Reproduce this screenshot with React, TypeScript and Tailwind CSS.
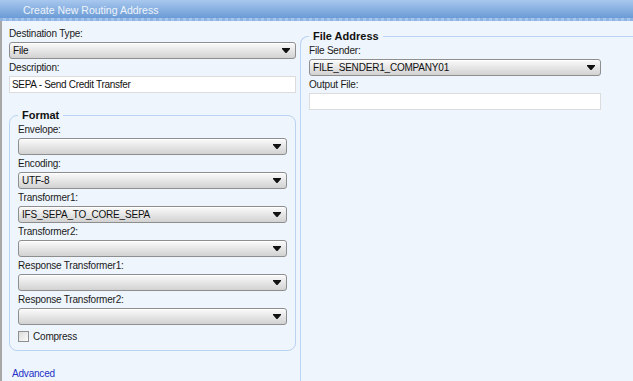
import { ReactNode } from "react";

const font = "font-['Liberation_Sans',Arial,sans-serif]";

function Arrow() {
    return (
        <svg width="8" height="5" viewBox="0 0 8 5" className="shrink-0">
            <path d="M0 0 H8 V1 L4.5 5 H3.5 L0 1 Z" fill="#111" />
        </svg>
    );
}

function Select({ value = "" }: { value?: string }) {
    return (
        <div className="flex items-center justify-between h-[17px] rounded-[3px] border border-[#8e8e8e] bg-gradient-to-b from-[#fbfbfb] via-[#e6e6e6] to-[#d2d2d2] pl-[3px] pr-[5px] shadow-[inset_0_1px_0_#fff]">
            <span className="text-[10px] leading-[15px] tracking-[-0.2px] text-[#111]">{value}</span>
            <Arrow />
        </div>
    );
}

function TextBox({ value = "" }: { value?: string }) {
    return (
        <div className="h-[17px] border border-[#dcdcdc] bg-white pl-[2px] text-[10px] leading-[15px] tracking-[-0.3px] text-[#111]">
            {value}
        </div>
    );
}

function Field({ label, children }: { label: string; children: ReactNode }) {
    return (
        <div className="flex flex-col">
            <div className="h-[17px] flex items-end pb-[3px] text-[10px] leading-[11px] tracking-[-0.2px] text-[#1a1a1a]">{label}</div>
            {children}
        </div>
    );
}

export default function App() {
    return (
        <div className={`w-[633px] h-[381px] overflow-hidden bg-[#eef5fc] flex flex-col ${font}`}>
            <div className="h-[21px] shrink-0 bg-gradient-to-b from-[#a8c8ee] to-[#6b9bd5] border-b-[3px] border-dotted border-[#8fb4e3] pl-[23px] pt-[3px] text-[10.5px] leading-[15px] text-[#eef4fb]">
                Create New Routing Address
            </div>
            <div className="flex flex-1 border-l-2 border-[#a7a7a7] min-h-0">
                <div className="w-[298px] shrink-0 pl-[7px] pr-[4px] pt-[4px] flex flex-col">
                    <Field label="Destination Type:">
                        <Select value="File" />
                    </Field>
                    <Field label="Description:">
                        <TextBox value="SEPA - Send Credit Transfer" />
                    </Field>
                    <fieldset className="mt-[17px] border border-[#b9d3f0] rounded-[8px] px-[8px] pb-[8px]">
                        <legend className="px-[4px] text-[11px] leading-[11px] font-bold text-[#111]">Format</legend>
                        <div className="flex flex-col">
                            <Field label="Envelope:"><Select /></Field>
                            <Field label="Encoding:"><Select value="UTF-8" /></Field>
                            <Field label="Transformer1:"><Select value="IFS_SEPA_TO_CORE_SEPA" /></Field>
                            <Field label="Transformer2:"><Select /></Field>
                            <Field label="Response Transformer1:"><Select /></Field>
                            <Field label="Response Transformer2:"><Select /></Field>
                            <label className="mt-[6px] flex items-center gap-[4px] text-[10px] leading-[11px] tracking-[-0.2px] text-[#1a1a1a]">
                                <span className="w-[11px] h-[11px] border border-[#8f8f8f] bg-gradient-to-br from-[#dcdcdc] to-[#fafafa]" />
                                Compress
                            </label>
                        </div>
                    </fieldset>
                    <a className="mt-[17px] ml-[3px] text-[10px] leading-[12px] tracking-[-0.2px] text-[#2431c8]">Advanced</a>
                </div>
                <fieldset className="flex-1 mt-[10px] border-l border-t border-[#b9d3f0] rounded-tl-[8px] pl-[8px] pr-[32px] h-[400px]">
                    <legend className="px-[4px] text-[11px] leading-[11px] font-bold text-[#111]">File Address</legend>
                    <Field label="File Sender:">
                        <Select value="FILE_SENDER1_COMPANY01" />
                    </Field>
                    <Field label="Output File:">
                        <TextBox />
                    </Field>
                </fieldset>
            </div>
        </div>
    );
}
